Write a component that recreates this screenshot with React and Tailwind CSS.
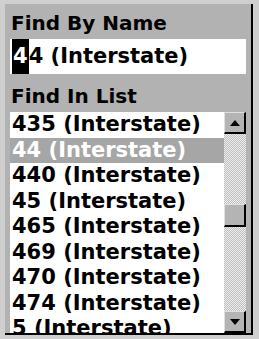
import React from "react";

const items = [
  "435 (Interstate)",
  "44 (Interstate)",
  "440 (Interstate)",
  "45 (Interstate)",
  "465 (Interstate)",
  "469 (Interstate)",
  "470 (Interstate)",
  "474 (Interstate)",
  "5 (Interstate)",
];

function ArrowBtn({ dir }) {
  return (
    <div className="w-[22px] h-[22px] shrink-0 bg-[#b4b4b4] border-r-2 border-b-2 border-black border-t border-l border-t-[#e0e0e0] border-l-[#e0e0e0] flex items-center justify-center">
      <svg width="12" height="8" viewBox="0 0 12 8">
        {dir === "up" ? (
          <polygon points="6,1 11,7 1,7" fill="#000" />
        ) : (
          <polygon points="1,1 11,1 6,7" fill="#000" />
        )}
      </svg>
    </div>
  );
}

export default function App() {
  return (
    <div
      className="w-[259px] h-[339px] bg-[#cfcfcf] pt-[4px] pl-[5px] overflow-hidden"
      style={{ fontFamily: '"DejaVu Sans", Verdana, sans-serif' }}
    >
      <div className="w-[248px] h-[331px] bg-[#b2b2b2] border-r-2 border-b-2 border-black flex flex-col pl-[5px] pr-[5px] font-bold text-black">
        <div className="h-[35px] pt-[7px] pl-[1px] text-[20px] leading-[24px]">Find By Name</div>
        <div className="h-[35px] bg-white flex items-stretch pl-[2px] text-[21px] leading-[35px]">
          <span className="bg-black text-white px-[1px]">4</span>
          <span>4 (Interstate)</span>
        </div>
        <div className="h-[38px] pt-[10px] pl-[1px] text-[20px] leading-[24px]">Find In List</div>
        <div className="flex-1 bg-white flex overflow-hidden">
          <div className="flex-1 flex flex-col overflow-hidden text-[21px] leading-[25.5px]">
            {items.map((it, i) => (
              <div
                key={it}
                className={
                  "h-[25.5px] shrink-0 pl-[2px] whitespace-nowrap " +
                  (i === 1 ? "bg-[#a6a6a6] text-white" : "")
                }
              >
                {it}
              </div>
            ))}
          </div>
          <div className="w-[22px] flex flex-col bg-[repeating-conic-gradient(#bdbdbd_0_25%,#efefef_0_50%)] bg-[length:2px_2px]">
            <ArrowBtn dir="up" />
            <div className="h-[70px] shrink-0" />
            <div className="h-[23px] shrink-0 bg-[#b4b4b4] border-r-2 border-b-2 border-black border-t border-l border-t-[#e0e0e0] border-l-[#e0e0e0]" />
            <div className="flex-1" />
            <ArrowBtn dir="down" />
          </div>
        </div>
      </div>
    </div>
  );
}
